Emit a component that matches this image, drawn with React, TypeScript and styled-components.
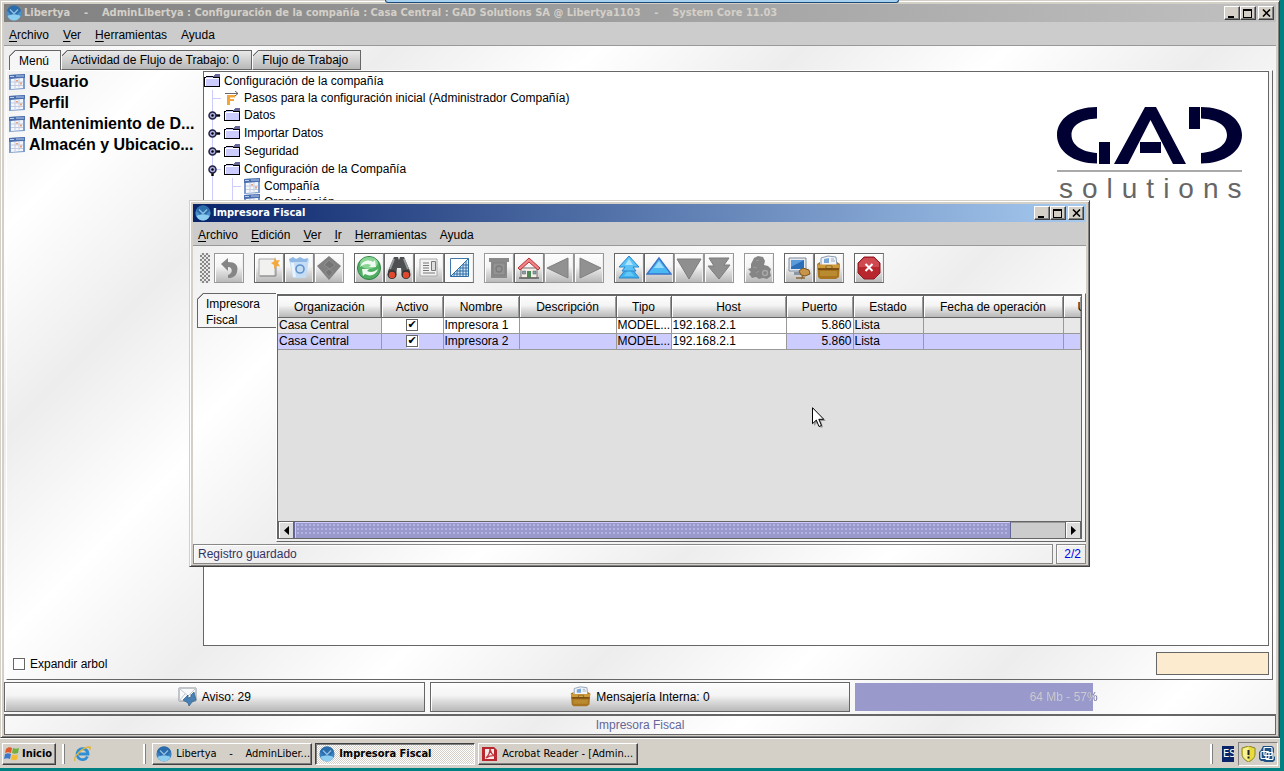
import React from "react";
import styled, { createGlobalStyle, css } from "styled-components";

const uiFont = `"Liberation Sans", Arial, sans-serif`;
const shellFont = `"DejaVu Sans Condensed", "Noto Sans", sans-serif`;
const sheen = `repeating-linear-gradient(135deg, #ededed -14px, #fff 131px, #ededed 276px)`;
const metal = `linear-gradient(#fdfdfd 0%, #f4f4f4 45%, #dcdcdc 65%, #b9b9b9 100%)`;

const Global = createGlobalStyle`
  * { box-sizing: border-box; }
  body { margin: 0; background: #008080; font: 12px/14px ${uiFont}; color: #000; }
  button, input { font: inherit; color: inherit; margin: 0; padding: 0; }
  ul { list-style: none; margin: 0; padding: 0; }
  svg { display: block; flex: none; }
`;

const Desktop = styled.div`
  position: relative;
  display: flex;
  flex-direction: column;
  min-height: 100vh;
  padding: 0 4px 3px 0;
  overflow: hidden;
`;

const PulledBar = styled.div`
  position: absolute;
  top: 0;
  left: 30%;
  right: 30%;
  height: 3px;
  background: #a6d2f0;
  border: solid #1c4a7c;
  border-width: 0 1px 1px;
  border-radius: 0 0 3px 3px;
`;

const Frame = styled.section`
  display: flex;
  flex-direction: column;
  min-width: 0;
  padding: 3px 3px 2px;
  background: #d4d0c8;
  border: 1px solid;
  border-color: #d4d0c8 #404040 #404040 #d4d0c8;
  box-shadow: inset 1px 1px #fff, inset -1px -1px #808080;
`;

const MainFrame = styled(Frame)`
  flex: 1;
`;

const ChildFrame = styled(Frame)`
  position: absolute;
  top: 200px;
  left: 189px;
  right: 194px;
`;

const TitleBar = styled.header<{ $active?: boolean }>`
  display: flex;
  align-items: center;
  gap: 2px;
  height: 18px;
  padding: 0 2px;
  font: bold 11px/18px ${shellFont};
  white-space: pre;
  color: ${(p) => (p.$active ? "#fff" : "#d4d0c8")};
  background: ${(p) =>
    p.$active
      ? "linear-gradient(90deg, #0a246a, #a6caf0)"
      : "linear-gradient(90deg, #808080, #c0c0c0)"};
`;

const TitleText = styled.h1`
  flex: 1;
  min-width: 0;
  margin: 0;
  font: inherit;
  overflow: hidden;
`;

const raised = css`
  background: #d4d0c8;
  border: 1px solid;
  border-color: #fff #404040 #404040 #fff;
  box-shadow: inset -1px -1px #808080;
`;

const CaptionButton = styled.button<{ $apart?: boolean }>`
  ${raised}
  display: flex;
  align-items: center;
  justify-content: center;
  width: 16px;
  height: 14px;
  margin-left: ${(p) => (p.$apart ? 0 : "-2px")};
`;

const MenuBar = styled.nav<{ $gap: number }>`
  display: flex;
  align-items: center;
  gap: ${(p) => p.$gap}px;
  height: 24px;
  padding: 2px 5px 0;
  background: #ccc;
  border-bottom: 1px solid #999;
`;

const MenuItem = styled.button`
  border: 0;
  background: none;
  line-height: 16px;
  u { text-underline-offset: 2px; }
`;

const MainBody = styled.div`
  display: flex;
  flex-direction: column;
  flex: 1;
  background: ${sheen};
`;

const TabStrip = styled.div`
  display: flex;
  padding: 4px 0 0 5px;
`;

const bevel = `linear-gradient(135deg, transparent 4px, #666 4px 5px, transparent 5px) border-box`;

const Tab = styled.button<{ $on?: boolean }>`
  height: 20px;
  padding: 0 ${(p) => (p.$on ? 11 : 12)}px 0 9px;
  border: 1px solid #666;
  border-width: 1px 1px ${(p) => (p.$on ? 0 : "1px")} 1px;
  border-left-color: ${(p) => (p.$on ? "#666" : "#fff")};
  background: ${bevel}, ${(p) => (p.$on ? "linear-gradient(#f6f6f6, #f6f6f6)" : "linear-gradient(#e8e8e8, #b8b8b8)")};
  clip-path: polygon(6px 0, 100% 0, 100% 100%, 0 100%, 0 6px);
`;

const TabPage = styled.div`
  display: flex;
  flex-direction: column;
  flex: 1;
  margin: 0 3px 2px 2px;
  border: 1px solid;
  border-color: #fff #666 #666 #fff;
`;

const Split = styled.div`
  display: flex;
  flex: 1;
  padding: 0 3px 0 0;
`;

const Favourites = styled.ul`
  flex: none;
  width: 196px;
  padding: 0 2px;
`;

const Favourite = styled.li`
  display: flex;
  align-items: center;
  gap: 4px;
  height: 21px;
  font: bold 16px/21px ${uiFont};
  white-space: nowrap;
`;

const TreePane = styled.div`
  display: flex;
  flex: 1;
  min-width: 0;
  background: #fff;
  border: 1px solid #666;
`;

const Tree = styled.ul`
  flex: 1;
`;

const TreeRow = styled.li<{ $leaf?: boolean }>`
  display: flex;
  align-items: center;
  height: ${(p) => (p.$leaf ? 16 : 18)}px;
  white-space: nowrap;
`;

const TreeLabel = styled.span`
  padding-left: 4px;
`;

const Guide = styled.span<{ $branch?: boolean }>`
  display: flex;
  align-items: center;
  width: 20px;
  height: 100%;
  padding-left: 3px;
  background: linear-gradient(#ccf, #ccf) 8px 0 / 1px 100% no-repeat
    ${(p) => p.$branch && ", linear-gradient(#ccf, #ccf) 8px 50% / 9px 1px no-repeat"};
`;

const LogoBox = styled.div`
  padding: 34px 22px 0 0;
`;

const PageFooter = styled.div`
  display: flex;
  align-items: center;
  justify-content: space-between;
  height: 33px;
  padding: 2px 3px 0 6px;
`;

const CheckLabel = styled.label`
  display: flex;
  align-items: center;
  gap: 5px;
`;

const Check = styled.input`
  appearance: none;
  display: grid;
  place-items: center;
  width: 12px;
  height: 12px;
  background: #fff;
  border: 1px solid #666;
  box-shadow: 1px 1px #fff;
  &:checked::after {
    content: "✔";
    font: bold 11px/10px "DejaVu Sans", sans-serif;
  }
`;

const QuickField = styled.input`
  width: 113px;
  height: 23px;
  padding: 0 4px;
  background: #fdebd0;
  border: 1px solid #666;
`;

const ActionRow = styled.div`
  display: grid;
  grid-template-columns: repeat(3, 1fr);
  gap: 5px;
  height: 30px;
`;

const WideButton = styled.button`
  display: flex;
  align-items: center;
  justify-content: center;
  gap: 4px;
  border: 1px solid #666;
  background: ${metal};
  box-shadow: inset 1px 1px #fff;
`;

const Memory = styled.div`
  display: flex;
  margin: 1px 4px 1px 0;
  background: linear-gradient(90deg, #99c 57%, transparent 57%);
`;

const MemoryLabel = styled.span`
  flex: 1;
  text-align: center;
  line-height: 28px;
  color: transparent;
  background: linear-gradient(90deg, #ccc 57%, #669 57%);
  background-clip: text;
`;

const MainStatus = styled.div`
  height: 21px;
  margin-top: 2px;
  border: 1px solid #666;
  border-top-width: 2px;
  line-height: 18px;
  text-align: center;
  color: #669;
`;

const ChildBody = styled.div`
  background: ${sheen};
`;

const ToolBar = styled.div`
  display: flex;
  gap: 10px;
  padding: 7px 6px 10px 7px;
`;

const Grip = styled.span`
  width: 10px;
  height: 30px;
  margin-right: -6px;
  background: repeating-conic-gradient(#888 0 25%, #e8e8e8 0 50%) 0 0 / 4px 4px;
`;

const ToolGroup = styled.div`
  display: flex;
`;

const ToolButton = styled.button<{ $pressed?: boolean }>`
  display: grid;
  place-items: center;
  width: 30px;
  height: 30px;
  border: 1px solid #666;
  border-right-color: #888;
  background: ${(p) => (p.$pressed ? "#fafafa" : metal)};
  box-shadow: inset 1px 1px #fff, inset -1px 0 #eee;
  &:disabled {
    border-color: #999;
    color: #888;
  }
`;

const Workspace = styled.div`
  display: flex;
  align-items: flex-start;
  padding: 0 0 2px 4px;
`;

const SideTab = styled.button`
  width: 79px;
  height: 35px;
  padding: 2px 8px 0;
  text-align: left;
  line-height: 16px;
  background: ${bevel}, linear-gradient(#f6f6f6, #f6f6f6);
  border: 1px solid #666;
  border-right: 0;
  clip-path: polygon(6px 0, 100% 0, 100% 100%, 0 100%, 0 6px);
`;

const GridPage = styled.div`
  flex: 1;
  min-width: 0;
  padding: 0 3px 2px 0;
  border: 1px solid;
  border-color: #fff #666 #666 #fff;
`;

const GridPane = styled.div`
  display: flex;
  flex-direction: column;
  min-height: 245px;
  background: #e0e0e0;
  border: 1px solid #666;
  border-top-width: 2px;
`;

const Table = styled.table`
  width: 100%;
  table-layout: fixed;
  border-collapse: collapse;
  margin-bottom: auto;
  th, td { padding: 0 1px; overflow: hidden; white-space: nowrap; }
`;

const Th = styled.th`
  height: 21px;
  && { padding-top: 2px; }
  font-weight: normal;
  background: ${metal};
  border: solid #666;
  border-width: 0 1px 1px 0;
  box-shadow: inset 1px 1px #fff, inset -1px 0 #999;
`;

const Tr = styled.tr<{ $selected?: boolean }>`
  height: 16px;
  background: ${(p) => (p.$selected ? "#ccf" : "#fff")};
`;

const Td = styled.td<{ $kind?: "locked" | "number" | "center" | "focus" }>`
  height: 16px;
  line-height: 14px;
  border: solid #999;
  border-width: 0 1px 1px 0;
  ${(p) => p.$kind === "locked" && "background: #e8e8e8;"}
  ${(p) => p.$kind === "number" && "text-align: right;"}
  ${(p) => p.$kind === "focus" && "background: #fff;"}
  ${Check} { margin: 0 auto; }
  ${Tr}[aria-selected="true"] &  { ${(p) => p.$kind === "locked" && "background: #ccf;"} }
`;

const ScrollBar = styled.div`
  display: flex;
  height: 17px;
  background: #ccc;
  border-top: 1px solid #666;
`;

const ScrollArrow = styled.button`
  display: grid;
  place-items: center;
  width: 16px;
  border: 1px solid #666;
  border-width: 0 1px;
  background: #ddd;
  box-shadow: inset 1px 1px #fff;
`;

const ScrollTrack = styled.div`
  flex: 1;
  display: flex;
  box-shadow: inset 0 1px #999;
`;

const ScrollThumb = styled.div`
  width: 93%;
  border: 1px solid #669;
  border-width: 0 1px;
  box-shadow: inset 1px 1px #ccf, inset 0 0 0 2px #99c;
  background: repeating-conic-gradient(#99c 0 25%, #b4b4e4 0 50%, #99c 0 75%, #7777b4 0) 0 0 / 4px 4px;
`;

const ChildStatus = styled.div`
  display: flex;
  gap: 3px;
`;

const StatusCell = styled.div<{ $grow?: boolean }>`
  ${(p) => (p.$grow ? "flex: 1; color: #336;" : "width: 30px; color: #00e; text-align: right;")}
  height: 20px;
  padding: 0 4px;
  line-height: 19px;
  border: 1px solid #888;
  box-shadow: inset 1px 1px #fff;
`;

const TaskBar = styled.footer`
  display: flex;
  align-items: center;
  gap: 3px;
  height: 30px;
  padding: 1px 2px 0 2px;
  background: #d4d0c8;
  box-shadow: inset 0 1px #fff;
  font: 11px/14px ${shellFont};
`;

const TaskButton = styled.button<{ $down?: boolean }>`
  ${raised}
  display: flex;
  align-items: center;
  gap: 4px;
  width: 160px;
  height: 22px;
  padding: 0 3px;
  white-space: pre;
  ${(p) =>
    p.$down &&
    css`
      font-weight: bold;
      background: repeating-conic-gradient(#fff 0 25%, #d4d0c8 0 50%) 0 0 / 2px 2px;
      border-color: #404040 #fff #fff #404040;
      box-shadow: inset 1px 1px #808080;
    `}
`;

const StartButton = styled(TaskButton)`
  width: auto;
  gap: 1px;
  padding: 0 3px 0 1px;
  font-weight: bold;
`;

const Divider = styled.span`
  width: 3px;
  height: 20px;
  margin: 0 3px;
  border: solid;
  border-width: 0 1px 0 2px;
  border-color: #fff #808080 #fff #fff;
`;

const QuickLaunch = styled.div`
  width: 66px;
  padding-left: 3px;
`;

const Tray = styled.div`
  display: flex;
  align-items: center;
  gap: 3px;
  height: 24px;
  padding: 0 2px;
  border: 1px solid;
  border-color: #808080 #fff #fff #808080;
`;

const Language = styled.span`
  width: 12px;
  height: 16px;
  margin: 0 1px 0 3px;
  padding-left: 1px;
  overflow: hidden;
  background: #0a246a;
  color: #fff;
  line-height: 16px;
`;

const Spacer = styled.span`
  flex: 1;
`;

const Pointer = styled.svg`
  position: absolute;
  left: 812px;
  top: 407px;
`;

/* ---- drawings ---- */

const Globe = ({ small }: { small?: boolean }) => (
  <svg width="16" height="16" viewBox="0 0 16 16" aria-hidden>
    <circle cx="8" cy="8" r="7.6" fill={small ? "#3a7fc0" : "#4a8fc8"} />
    <path d="M1 6c1-4 4-5.500 7-5.500S14 2 15 6c-2 1-3 2-4 4L8 8l-3 2C4 8 3 7 1 6z" fill="#2b6cab" />
    <path d="M1.500 11c3-2 10-2 13 0-1 3-4 4.600-6.500 4.600S2.500 14 1.500 11z" fill="#8ccdf0" />
    <path d="M4 4.500l4 4 4-4" fill="none" stroke="#8fc0e6" strokeWidth="1.300" />
  </svg>
);

const FormIcon = () => (
  <svg width="16" height="16" viewBox="0 0 16 16" aria-hidden>
    <path d="M0 1l16-1v15L0 16z" fill="#7f9dcc" />
    <path d="M0 1l16-1v4L0 5z" fill="#4a6eae" />
    <path d="M1 2.500h4M7 2h8" stroke="#b9cdec" />
    <path d="M2 5l12-1v10L2 15z" fill="#f4f6fb" />
    <path d="M2 8h12M2 11.500h12M6 5v9M10 4.500v9" stroke="#c3cce0" />
    <path d="M7 6h2v1.500H7zM11 8.500h2v2h-2z" fill="#e8a27c" />
  </svg>
);

const FolderIcon = () => (
  <svg width="16" height="14" viewBox="0 0 16 14" aria-hidden shapeRendering="crispEdges">
    <path d="M9 3l2-3h5v3z" fill="#669" />
    <path d="M0.500 12.500v-9h1l1-1h6l1 1h6v9z" fill="#ccf" stroke="#000" />
    <path d="M1.500 11.500v-7h13" fill="none" stroke="#fff" />
  </svg>
);

const FlowIcon = () => (
  <svg width="16" height="14" viewBox="0 0 16 14" aria-hidden>
    <path d="M1 2.500h13M11 0l3 2.500L11 5" fill="none" stroke="#666" />
    <path d="M3 4h8v2.500H6V8h4v2H6v4H3z" fill="#f0a63c" />
  </svg>
);

const Handle = ({ open }: { open?: boolean }) => (
  <svg width="13" height="13" viewBox="0 0 13 13" aria-hidden>
    <path d={open ? "M5.500 8v5" : "M8 6.500h5"} stroke="#000" strokeWidth="2.400" />
    <circle cx="5.500" cy="6.500" r="3.500" fill="#aaaadd" stroke="#224" strokeWidth="1.500" />
    <circle cx="5.500" cy="6.500" r="1.200" fill="#000" />
  </svg>
);

const CompanyLogo = () => (
  <svg width="190" height="98" viewBox="0 0 190 98" role="img" aria-label="GAD solutions">
    <g fill="#000033">
      <path d="M41 1C17 1 1 13 1 29s16 28.500 40 28.500V47C26 46 15.500 39 15.500 29S26 13 41 12.500z" />
      <path d="M43 36h11v22H43z" />
      <path d="M89 1h11l30 57h-13L94.500 14 72 58H58z" />
      <path d="M84 36h21v11H84z" />
      <path d="M133 1h11v22h-11z" />
      <path d="M145 1c24 0 41 12 41 28s-17 28.500-41 28.500V47c15-1 26-8 26-18s-11-16-26-16.500z" />
    </g>
    <path d="M1 65h185" stroke="#aaa" strokeWidth="2" />
    <text x="3" y="92" fontFamily="Liberation Sans, Arial, sans-serif" fontSize="28" letterSpacing="9" fill="#666">
      solutions
    </text>
  </svg>
);

const MinGlyph = () => (
  <svg width="10" height="9" shapeRendering="crispEdges"><path d="M1 7h6v2H1z" /></svg>
);
const MaxGlyph = () => (
  <svg width="10" height="9" shapeRendering="crispEdges">
    <path d="M0 0h9v9H0zM1 2v6h7V2z" fillRule="evenodd" />
  </svg>
);
const CloseGlyph = () => (
  <svg width="9" height="8"><path d="M1 .5l7 7M8 .5l-7 7" stroke="#000" strokeWidth="1.600" /></svg>
);

const Icon = ({ children }: { children: React.ReactNode }) => (
  <svg width="26" height="26" viewBox="0 0 26 26" aria-hidden>{children}</svg>
);

const CabinetShape = () => (
  <>
    <path d="M5 3l7-2 8 1 1 9H5z" fill="#f2f5fa" stroke="#8a9ab2" />
    <path d="M8 4l5-1v5H8z" fill="#7ba6d8" />
    <path d="M15 4h3M15 6h4" stroke="#9ab" />
    <path d="M1 9l3-2v3h17V7l3 2-1 13-3 2H4l-2-2z" fill="#a87420" />
    <path d="M1 9.500h23l-1 4H2z" fill="#cf9a3a" />
    <path d="M2 14h21" stroke="#6b430d" strokeWidth="1.500" />
    <path d="M10 11h6v2h-6z" fill="#f3cf6e" stroke="#6b430d" strokeWidth=".7" />
    <path d="M4 16h17v5H4z" fill="#b98a30" />
  </>
);

const tools: Record<string, React.ReactNode> = {
  Deshacer: <path d="M5 9l7-6v4c7 0 11 3 9 10-1 4-4 6-9 6v-3c5-1 5-8 0-8v4z" fill="#858585" />,
  Nuevo: (
    <>
      <path d="M3 4h16v17H3z" fill="#f1f1ef" stroke="#aaa" />
      <path d="M4 21h16V6" fill="none" stroke="#888" />
      <path d="M19 2l1.500 3.500L24 5l-2 3 2 3.500-3.500-.5L18 14v-4l-3-2 3-1.500z" fill="#f4a93c" />
    </>
  ),
  Eliminar: (
    <>
      <path d="M3 4h20l-3 19H7z" fill="#c4dcf4" />
      <path d="M3 4l4-2 3 2 4-2 4 2 4-1-1 4H4z" fill="#8fb8e4" />
      <path d="M5 8l2 14h3L8 8z" fill="#e8f3fd" />
      <circle cx="14" cy="14" r="4" fill="none" stroke="#5f92cc" strokeWidth="1.600" />
    </>
  ),
  Guardar: (
    <>
      <path d="M1 11L13 1l12 10-12 14z" fill="#808080" />
      <path d="M8 10l5-5 6 5-5 4zM9 17l4-3 4 3-4 5z" fill="#757575" stroke="#8e8e8e" />
    </>
  ),
  Refrescar: (
    <>
      <circle cx="13" cy="13" r="11.500" fill="#4fae62" stroke="#2f8244" />
      <ellipse cx="13" cy="8" rx="9" ry="6" fill="#8ad596" />
      <path d="M4 12c2-6 8-8 13-5l2-2 1 7h-7l2-2c-4-2-7-1-11 2zM22 14c-2 6-8 8-13 5l-2 2-1-7h7l-2 2c4 2 7 1 11-2z" fill="#effbf0" />
    </>
  ),
  Buscar: (
    <>
      <path d="M8 2h4l1 3 1-3h4l6 14-1 6h-7l-1-9h-4l-1 9H3l-1-6z" fill="#4d4f50" />
      <path d="M8 4L4 14M18 4l4 10" stroke="#96999a" strokeWidth="2" />
      <circle cx="6" cy="19.500" r="4.500" fill="#333" />
      <circle cx="20" cy="19.500" r="4.500" fill="#333" />
      <circle cx="6" cy="20" r="3.200" fill="#e0492f" />
      <circle cx="20" cy="20" r="3.200" fill="#e0492f" />
    </>
  ),
  Anexos: (
    <>
      <path d="M4 4h17v17H4z" fill="#f2f2f2" stroke="#aaa" />
      <path d="M7 8h6M7 10.500h6M7 13h6M7 15.500h6M7 18h12" stroke="#777" />
      <path d="M15.500 6.500h4v9h-4z" fill="#ddd" stroke="#777" />
    </>
  ),
  Rejilla: (
    <>
      <path d="M4.500 21.500v-18h18" fill="#fff" stroke="#4278aa" />
      <path d="M22.500 3.500v18h-18z" fill="#d4e8f8" stroke="#2e6ca4" />
      <path d="M8 19h14M11 16h11M14 13h8M17 10h5M8 18v3M11 15v6M14 12v9M17 9v12M20 6v15" stroke="#2e6ca4" />
    </>
  ),
  Historial: (
    <>
      <path d="M3 3h20v4H21v16H5V7H3z" fill="#8a8a8a" />
      <path d="M7 8h12v12H7z" fill="#939393" stroke="#808080" />
      <circle cx="13" cy="14" r="3" fill="none" stroke="#7c7c7c" strokeWidth="1.300" />
    </>
  ),
  Inicio: (
    <>
      <path d="M5 13h16v10H5z" fill="#f4ede6" stroke="#777" />
      <path d="M13 3l11 10-2 2-9-8-9 8-2-2z" fill="#f08484" stroke="#b8303a" />
      <path d="M11 16h4v7h-4z" fill="#4e8a56" />
      <path d="M6.500 16h3v3h-3zM17 16h3v3h-3z" fill="#7ea8b8" stroke="#555" strokeWidth=".5" />
      <path d="M3 23h20" stroke="#666" strokeWidth="1.500" />
    </>
  ),
  Anterior: <path d="M1 13L22 3v20z" fill="#919191" stroke="#808080" />,
  Siguiente: <path d="M25 13L4 3v20z" fill="#919191" stroke="#808080" />,
  Primero: (
    <>
      <path d="M13 10l10 13H3z" fill="#3fb2ee" stroke="#2a86cc" />
      <path d="M13 14l5 7H8z" fill="#63c8f8" />
      <path d="M13 1l10 11h-6l3 4H6l3-4H3z" fill="#5cc3f6" stroke="#2a86cc" />
      <path d="M13 4l4 6H9z" fill="#aee4fc" />
    </>
  ),
  Subir: (
    <>
      <path d="M13 3l12 16H1z" fill="#4ab8f2" stroke="#3a72cc" strokeWidth="1.400" />
      <path d="M13 6l5 7H8z" fill="#9adcfb" />
    </>
  ),
  Bajar: <path d="M1 4h24L13 24z" fill="#8f8f8f" stroke="#7c7c7c" />,
  Último: (
    <path d="M3 3h20l-5 7h6L13 24 2 11h6z" fill="#8f8f8f" stroke="#7c7c7c" />
  ),
  Proceso: (
    <>
      <path d="M8 3l4-2 5 1 2 4-1 4 4 1 3 3-1 3 1 4-4 3-4-1-4 1-3-2-4 1-3-4 2-2-3-3 3-1V9z" fill="#858585" />
      <circle cx="19" cy="18" r="2.500" fill="none" stroke="#a8a8a8" strokeWidth="1.500" />
      <path d="M10 6l3-1M7 12l4 1M10 18l3-2" stroke="#9c9c9c" />
    </>
  ),
  Pantalla: (
    <>
      <path d="M3 3h17v13H3z" fill="#e6e9ee" stroke="#7d8ba0" />
      <path d="M5 5h13v9H5z" fill="#2c6fb8" />
      <path d="M5 5h13L5 12z" fill="#5b9bdc" />
      <path d="M8 17h7v3H8z" fill="#8c96a4" />
      <path d="M13 16l4-3 6 2 1 4-5 2-4-1z" fill="#c8944a" stroke="#7a5420" />
      <path d="M10 23h9M17 21l-2 3" stroke="#8c6a34" strokeWidth="1.500" />
    </>
  ),
  Archivo: <CabinetShape />,
  Salir: (
    <>
      <path d="M8 2h10l6 6v10l-6 6H8l-6-6V8z" fill="#b8262e" stroke="#8c1c22" />
      <path d="M8 3h10l5 5v4H3V8z" fill="#cf4a50" />
      <path d="M9.500 9l7 7M16.500 9l-7 7" stroke="#fff" strokeWidth="2" />
    </>
  ),
};

const toolGroups = [
  ["Deshacer"],
  ["Nuevo", "Eliminar", "Guardar"],
  ["Refrescar", "Buscar", "Anexos", "Rejilla"],
  ["Historial", "Inicio", "Anterior", "Siguiente"],
  ["Primero", "Subir", "Bajar", "Último"],
  ["Proceso"],
  ["Pantalla", "Archivo"],
  ["Salir"],
];
const disabledTools = ["Deshacer", "Guardar", "Historial", "Anterior", "Siguiente", "Bajar", "Último", "Proceso"];

const columns: [string, number][] = [
  ["Organización", 103],
  ["Activo", 62],
  ["Nombre", 76],
  ["Descripción", 97],
  ["Tipo", 55],
  ["Host", 115],
  ["Puerto", 67],
  ["Estado", 70],
  ["Fecha de operación", 140],
];

const Col = styled.col<{ $w?: number }>`
  width: ${(p) => (p.$w ? `${p.$w}px` : "auto")};
`;

const CutTh = styled(Th)`
  &&& { padding-left: 14px; }
  border-right: 0;
  text-align: left;
`;

const printers = [
  { org: "Casa Central", name: "Impresora 1", type: "MODEL...", host: "192.168.2.1", port: "5.860", state: "Lista" },
  { org: "Casa Central", name: "Impresora 2", type: "MODEL...", host: "192.168.2.1", port: "5.860", state: "Lista" },
];

const Menu = ({ items, gap }: { items: [string, string][]; gap: number }) => (
  <MenuBar $gap={gap}>
    {items.map(([key, rest]) => (
      <MenuItem key={key + rest} type="button">
        {key && <u>{key}</u>}
        {rest}
      </MenuItem>
    ))}
  </MenuBar>
);

const Caption = ({ active, children }: { active?: boolean; children: string }) => (
  <TitleBar $active={active}>
    <Globe />
    <TitleText>{children}</TitleText>
    <CaptionButton $apart aria-label="Minimizar"><MinGlyph /></CaptionButton>
    <CaptionButton aria-label="Maximizar"><MaxGlyph /></CaptionButton>
    <CaptionButton $apart aria-label="Cerrar"><CloseGlyph /></CaptionButton>
  </TitleBar>
);

export default function App() {
  return (
    <Desktop>
      <Global />
      <MainFrame>
        <Caption>
          {"Libertya    -    AdminLibertya : Configuración de la compañía : Casa Central : GAD Solutions SA @ Libertya1103    -    System Core 11.03"}
        </Caption>
        <Menu gap={14} items={[["A", "rchivo"], ["V", "er"], ["H", "erramientas"], ["", "Ayuda"]]} />
        <MainBody>
          <TabStrip role="tablist">
            <Tab role="tab" aria-selected $on>Menú</Tab>
            <Tab role="tab">Actividad de Flujo de Trabajo: 0</Tab>
            <Tab role="tab">Flujo de Trabajo</Tab>
          </TabStrip>
          <TabPage>
            <Split>
              <Favourites>
                {["Usuario", "Perfil", "Mantenimiento de D...", "Almacén y Ubicacio..."].map((name) => (
                  <Favourite key={name}><FormIcon />{name}</Favourite>
                ))}
              </Favourites>
              <TreePane>
                <Tree>
                  <TreeRow><FolderIcon /><TreeLabel>Configuración de la compañía</TreeLabel></TreeRow>
                  <TreeRow $leaf>
                    <Guide $branch /><FlowIcon />
                    <TreeLabel>Pasos para la configuración inicial (Administrador Compañía)</TreeLabel>
                  </TreeRow>
                  {["Datos", "Importar Datos", "Seguridad", "Configuración de la Compañía"].map((name, i) => (
                    <TreeRow key={name}>
                      <Guide $branch><Handle open={i === 3} /></Guide>
                      <FolderIcon />
                      <TreeLabel>{name}</TreeLabel>
                    </TreeRow>
                  ))}
                  {["Compañía", "Organización"].map((name) => (
                    <TreeRow $leaf key={name}>
                      <Guide /><Guide $branch /><FormIcon />
                      <TreeLabel>{name}</TreeLabel>
                    </TreeRow>
                  ))}
                </Tree>
                <LogoBox><CompanyLogo /></LogoBox>
              </TreePane>
            </Split>
            <PageFooter>
              <CheckLabel><Check type="checkbox" />Expandir arbol</CheckLabel>
              <QuickField aria-label="Buscar en el árbol" />
            </PageFooter>
          </TabPage>
          <ActionRow>
            <WideButton>
              <svg width="20" height="20" viewBox="0 0 20 20" aria-hidden>
                <path d="M1 1h17v13H1z" fill="#f7f9fb" stroke="#8c939c" />
                <path d="M1 1l9 8 8-8M1 14l6-7M18 14l-6-7" fill="none" stroke="#c3c9d0" />
                <path d="M5 13l5-5v3l3-1V8l3-3 2 8-4 2-3 4-1-3z" fill="#4880b4" stroke="#2d5c8c" strokeWidth=".7" />
              </svg>
              Aviso: 29
            </WideButton>
            <WideButton>
              <svg width="22" height="22" viewBox="0 0 26 26" aria-hidden><CabinetShape /></svg>
              Mensajería Interna: 0
            </WideButton>
            <Memory role="progressbar" aria-valuenow={57}>
              <MemoryLabel>64 Mb - 57%</MemoryLabel>
            </Memory>
          </ActionRow>
          <MainStatus>Impresora Fiscal</MainStatus>
        </MainBody>
      </MainFrame>

      <TaskBar>
        <StartButton>
          <svg width="17" height="16" viewBox="0 0 17 16" aria-hidden>
            <path d="M2 3c2-2 4-2 6-1L7 7C5 6 3 6 1 7z" fill="#e0582c" />
            <path d="M9 2c2 1 4 1 6 0l-1 5c-2 1-4 1-6 0z" fill="#6fb13c" />
            <path d="M1 8c2-1 4-1 6 0l-1 5c-2-1-4-1-6 0z" fill="#3c78cc" />
            <path d="M8 8.500c2 1 4 1 6 0l-1 5c-2 1-4 1-6 0z" fill="#f2bc30" />
          </svg>
          Inicio
        </StartButton>
        <Divider />
        <QuickLaunch>
          <svg width="17" height="16" viewBox="0 0 17 16" aria-hidden>
            <path d="M13.500 10.500A5.500 5.500 0 1 1 14 8H5" fill="none" stroke="#2f8fd4" strokeWidth="2.800" />
            <path d="M1 15C-1 11 8 1 16 1c1 2-1 3-1 3" fill="none" stroke="#e2b437" strokeWidth="1.300" />
          </svg>
        </QuickLaunch>
        <Divider />
        <TaskButton><Globe small />{"Libertya    -    AdminLiber..."}</TaskButton>
        <TaskButton $down><Globe small />Impresora Fiscal</TaskButton>
        <TaskButton>
          <svg width="16" height="16" viewBox="0 0 16 16" aria-hidden>
            <path d="M0 1h12l3 3v11H0z" fill="#b8282e" />
            <path d="M3 3h9v10H3z" fill="#f6eaea" />
            <path d="M4 12c3-3 4-6 4-9 1 4 2 6 6 7-4-1-7 0-10 2z" fill="none" stroke="#c0343a" strokeWidth="1.300" />
          </svg>
          Acrobat Reader - [Admin...
        </TaskButton>
        <Spacer />
        <Divider />
        <Language>ES</Language>
        <Tray>
          <svg width="15" height="16" viewBox="0 0 15 16" aria-hidden>
            <path d="M7.500 0L14 2v6c0 4-3 6-6.500 8C4 14 1 12 1 8V2z" fill="#e8dc3c" stroke="#8a8430" />
            <path d="M7.500 1v14C4 13 2 11 2 8V3z" fill="#f7f29a" />
            <path d="M6.500 4h2v5h-2zM6.500 10.500h2v2h-2z" fill="#222" />
          </svg>
          <svg width="16" height="16" viewBox="0 0 16 16" aria-hidden>
            <path d="M4 0h9l2 2v8l1 1v3l-2 2H6l-2-1H2l-2-2V6l2-2z" fill="#1d5184" />
            <g fill="none" stroke="#fff" strokeWidth="1.200">
              <rect x="5" y="1.500" width="8" height="8" rx="1" />
              <rect x="2" y="5.500" width="8" height="7" rx="1" />
              <rect x="7" y="6.500" width="7" height="7" rx="1" />
            </g>
          </svg>
        </Tray>
      </TaskBar>

      <PulledBar />

      <ChildFrame>
        <Caption active>Impresora Fiscal</Caption>
        <Menu
          gap={13}
          items={[["A", "rchivo"], ["E", "dición"], ["V", "er"], ["I", "r"], ["H", "erramientas"], ["", "Ayuda"]]}
        />
        <ChildBody>
          <ToolBar role="toolbar">
            <Grip />
            {toolGroups.map((group) => (
              <ToolGroup key={group[0]}>
                {group.map((name) => (
                  <ToolButton
                    key={name}
                    aria-label={name}
                    disabled={disabledTools.includes(name)}
                    $pressed={name === "Rejilla"}
                  >
                    <Icon>{tools[name]}</Icon>
                  </ToolButton>
                ))}
              </ToolGroup>
            ))}
          </ToolBar>
          <Workspace>
            <SideTab>Impresora Fiscal</SideTab>
            <GridPage>
              <GridPane>
                <Table>
                  <colgroup>
                    {columns.map(([name, w]) => <Col key={name} $w={w} />)}
                    <Col />
                  </colgroup>
                  <thead>
                    <tr>
                      {columns.map(([name]) => <Th key={name}>{name}</Th>)}
                      <CutTh>U</CutTh>
                    </tr>
                  </thead>
                  <tbody>
                    {printers.map((p, i) => (
                      <Tr key={p.name} $selected={i === 1} aria-selected={i === 1}>
                        <Td $kind="locked">{p.org}</Td>
                        <Td><Check type="checkbox" aria-label={`Activo ${p.name}`} defaultChecked /></Td>
                        <Td>{p.name}</Td>
                        <Td />
                        <Td>{p.type}</Td>
                        <Td $kind="focus">{p.host}</Td>
                        <Td $kind="number">{p.port}</Td>
                        <Td $kind="locked">{p.state}</Td>
                        <Td $kind="locked" />
                        <Td $kind="locked" />
                      </Tr>
                    ))}
                  </tbody>
                </Table>
                <ScrollBar>
                  <ScrollArrow aria-label="Izquierda">
                    <svg width="5" height="9"><path d="M5 0v9L0 4.500z" /></svg>
                  </ScrollArrow>
                  <ScrollTrack><ScrollThumb /></ScrollTrack>
                  <ScrollArrow aria-label="Derecha">
                    <svg width="5" height="9"><path d="M0 0v9l5-4.500z" /></svg>
                  </ScrollArrow>
                </ScrollBar>
              </GridPane>
            </GridPage>
          </Workspace>
          <ChildStatus>
            <StatusCell $grow>Registro guardado</StatusCell>
            <StatusCell>2/2</StatusCell>
          </ChildStatus>
        </ChildBody>
      </ChildFrame>

      <Pointer width="14" height="22" viewBox="0 0 14 22" aria-hidden>
        <path d="M2 3v16l4-4 3 6 2-1-2-6h5z" fill="#000" opacity=".3" />
        <path d="M.5 .7v16l3.800-3.600 2.700 6.400 2.500-1-2.700-6.200h5z" fill="#fff" stroke="#000" />
      </Pointer>
    </Desktop>
  );
}
